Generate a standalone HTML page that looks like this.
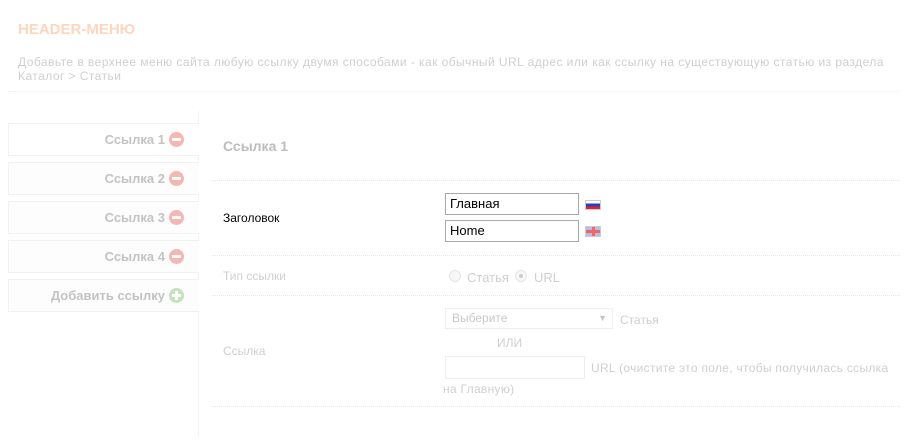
<!DOCTYPE html>
<html><head><meta charset="utf-8"><style>
*{margin:0;padding:0;box-sizing:border-box}
body{width:905px;height:446px;background:#fff;font-family:"Liberation Sans",Arial,sans-serif;font-size:13px;position:relative;overflow:hidden}
.a{position:absolute;white-space:nowrap}
.tab{position:absolute;left:8px;width:191px;height:33px;border:1px solid #f2f2f2;border-right:none;background:#fdfdfd;text-align:right;padding-right:15px;line-height:31px;font-size:13px;font-weight:bold;color:#c3c3c3}
.ic{display:inline-block;width:15px;height:15px;border-radius:50%;background:#f5b7b2;vertical-align:-3px;margin-left:4px;position:relative}
.ic:after{content:"";position:absolute;left:3px;top:6px;width:9px;height:3px;background:#fff}
.ic.g{background:#c4e3bd}
.ic.g:before{content:"";position:absolute;left:6px;top:3px;width:3px;height:9px;background:#fff}
.hr{position:absolute;left:212px;width:688px;border-top:1px dotted #e8e8e8}
.inp{position:absolute;left:445px;width:134px;height:22px;border:1px solid #a9a9a9;padding-left:4px;line-height:20px;font-size:13px;color:#000}
</style></head><body>
<div class="a" style="left:18px;top:21px;font-size:15px;font-weight:bold;color:#fdd6bd">HEADER-МЕНЮ</div>
<div class="a" style="left:18px;top:55px;font-size:12px;line-height:14px;color:#cfcfcf;letter-spacing:0.45px">Добавьте в верхнее меню сайта любую ссылку двумя способами - как обычный URL адрес или как ссылку на существующую статью из раздела<br>Каталог &gt; Статьи</div>
<div style="position:absolute;left:8px;top:91px;width:892px;border-top:1px dotted #eee"></div>
<div style="position:absolute;left:198px;top:111px;height:325px;border-left:1px solid #f2f2f2"></div>
<div class="tab" style="top:123px;background:#fff">Ссылка 1<span class="ic"></span></div>
<div class="tab" style="top:162px">Ссылка 2<span class="ic"></span></div>
<div class="tab" style="top:201px">Ссылка 3<span class="ic"></span></div>
<div class="tab" style="top:240px">Ссылка 4<span class="ic"></span></div>
<div class="tab" style="top:279px">Добавить ссылку<span class="ic g"></span></div>
<div class="a" style="left:223px;top:138px;font-size:14px;font-weight:bold;color:#bdbdbd">Ссылка 1</div>
<div class="hr" style="top:180px"></div>
<div class="a" style="left:223px;top:211px;font-size:12px;color:#000">Заголовок</div>
<div class="inp" style="top:193px">Главная</div>
<div class="inp" style="top:220px">Home</div>
<div class="a" style="left:585px;top:200px;width:16px;height:10px;background:linear-gradient(#fff 0 33%,#2a3fc0 33% 66%,#e2232a 66%);border:1px solid #ccc"></div>
<div class="a" style="left:585px;top:226px;width:16px;height:11px;background:#b8bde3;border:1px solid #ccc"><div style="position:absolute;left:6px;top:0;width:3px;height:9px;background:#e66"></div><div style="position:absolute;left:0;top:3px;width:14px;height:3px;background:#e66"></div></div>
<div class="hr" style="top:255px"></div>
<div class="a" style="left:223px;top:269px;font-size:12px;color:#cfcfcf">Тип ссылки</div>
<div class="a" style="left:449px;top:270px;width:12px;height:12px;border-radius:50%;border:1px solid #e5e5e5;background:#f7f7f7"></div>
<div class="a" style="left:467px;top:270px;color:#cfcfcf">Статья</div>
<div class="a" style="left:515px;top:270px;width:12px;height:12px;border-radius:50%;border:1px solid #e5e5e5;background:#f7f7f7"><div style="position:absolute;left:3px;top:3px;width:4px;height:4px;border-radius:50%;background:#ccc"></div></div>
<div class="a" style="left:534px;top:270px;color:#cfcfcf">URL</div>
<div class="hr" style="top:295px"></div>
<div class="a" style="left:223px;top:344px;font-size:12px;color:#cfcfcf">Ссылка</div>
<div class="a" style="left:445px;top:308px;width:168px;height:21px;border:1px solid #eee;font-size:12px;color:#c8c8c8;line-height:19px;padding-left:6px">Выберите<span style="position:absolute;right:5px;font-size:9px">▼</span></div>
<div class="a" style="left:620px;top:313px;font-size:12px;color:#cfcfcf">Статья</div>
<div class="a" style="left:497px;top:336px;font-size:12px;color:#cfcfcf">ИЛИ</div>
<div class="a" style="left:445px;top:356px;width:140px;height:23px;border:1px solid #eee"></div>
<div class="a" style="left:591px;top:361px;font-size:12px;color:#cfcfcf;letter-spacing:0.3px">URL (очистите это поле, чтобы получилась ссылка</div>
<div class="a" style="left:443px;top:382px;font-size:12px;color:#cfcfcf;letter-spacing:0.3px">на Главную)</div>
<div class="hr" style="top:406px"></div>
</body></html>
